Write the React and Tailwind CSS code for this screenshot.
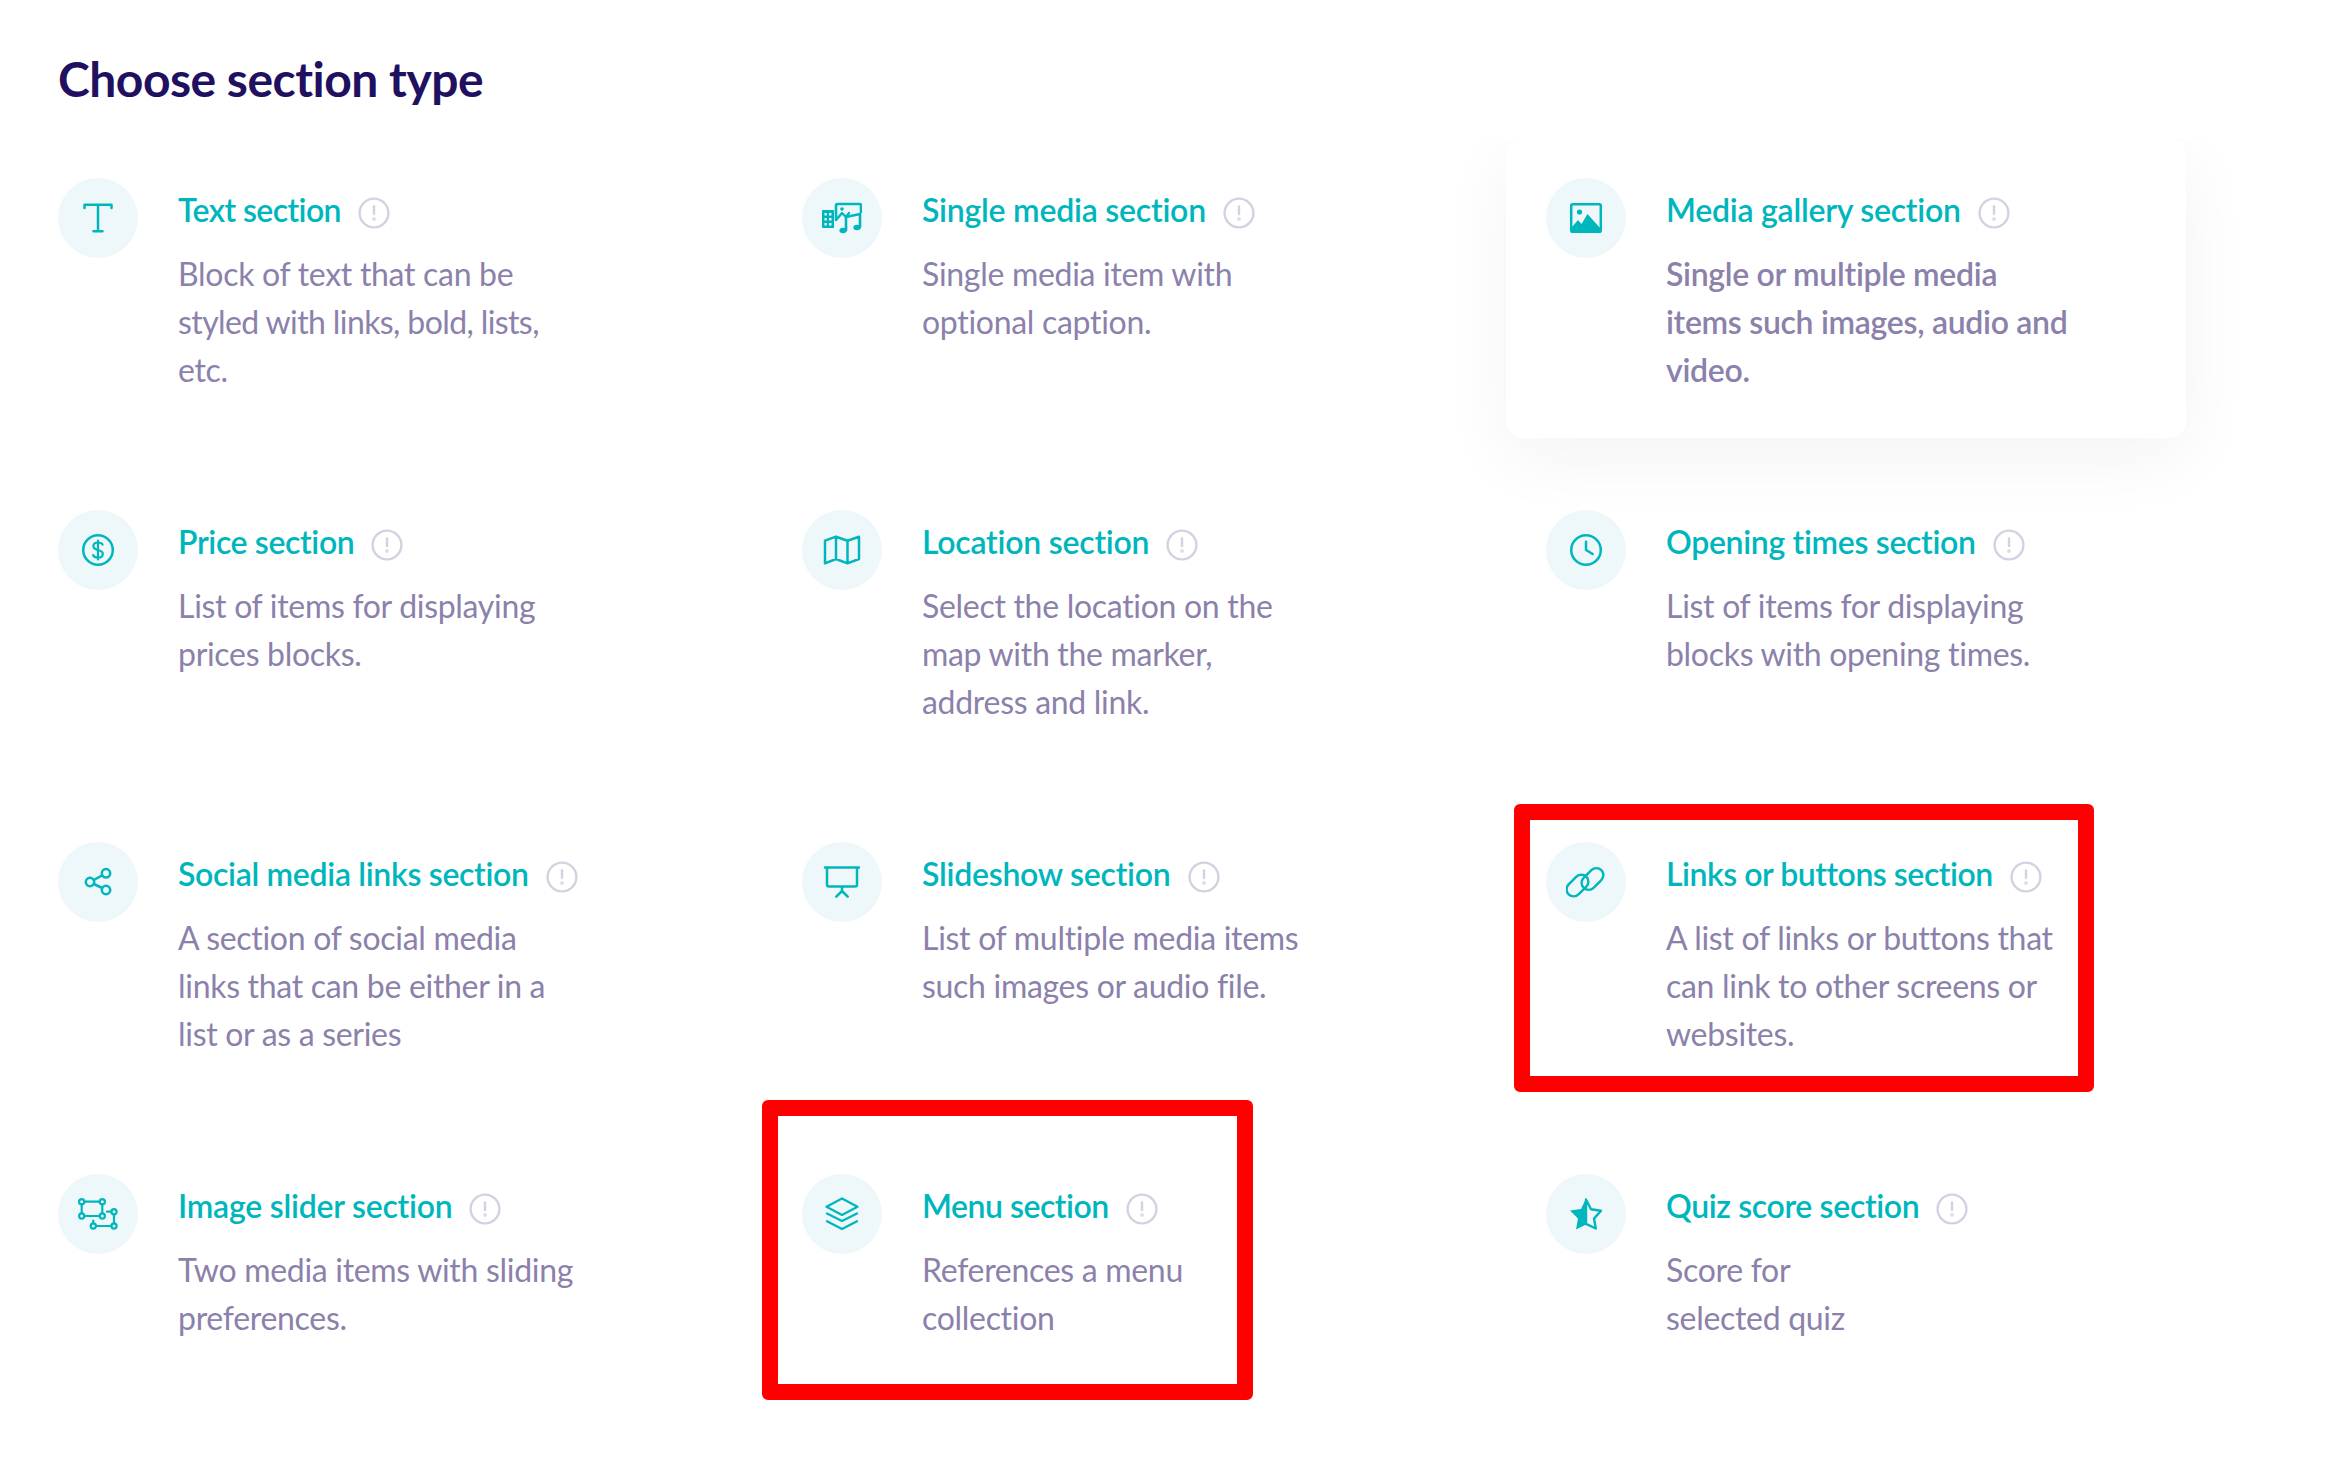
const TEAL = "#00b6bd";

const Svg = ({ children }) => (
  <svg width="40" height="40" viewBox="0 0 40 40" fill="none" stroke={TEAL} strokeWidth="2.5" strokeLinecap="round" strokeLinejoin="round">
    {children}
  </svg>
);

const icons = {
  text: (
    <Svg>
      <path d="M6.5 10V6.8H33.5V10M20 6.8V33M15.5 33.2H24.5" />
    </Svg>
  ),
  single: (
    <Svg>
      <path fill={TEAL} stroke="none" fillRule="evenodd" d="M1 12h11v18H1a1 1 0 0 1-1-1V13a1 1 0 0 1 1-1zM2.5 15v2.5h2.2V15zM7 15v2.5h2.5V15zM2.5 20v2.5h2.2V20zM7 20v2.5h2.5V20zM2.5 25v2.5h2.2V25zM7 25v2.5h2.5V25z" />
      <path strokeWidth="2.6" d="M14 22V7.5a1.5 1.5 0 0 1 1.5-1.5h22a1.5 1.5 0 0 1 1.5 1.5V14" />
      <path strokeWidth="2.4" d="M15 21l5-6 4 4 3-4" />
      <circle cx="20" cy="11" r="1.8" fill={TEAL} stroke="none" />
      <path strokeWidth="2.6" d="M24 32V19l14-3v13" />
      <ellipse cx="21" cy="32.5" rx="3.6" ry="2.8" fill={TEAL} stroke="none" />
      <ellipse cx="35" cy="29.5" rx="3.6" ry="2.8" fill={TEAL} stroke="none" />
    </Svg>
  ),
  image: (
    <Svg>
      <rect x="5.2" y="6.2" width="29.6" height="27.6" rx="1.6" />
      <circle cx="13.5" cy="14" r="2.6" fill={TEAL} stroke="none" />
      <path fill={TEAL} stroke="none" d="M6 34v-5l6-7 3.5 4L21.5 16 34 30v4z" />
    </Svg>
  ),
  price: (
    <Svg>
      <circle cx="20" cy="20" r="14.8" />
      <path d="M24.6 14.6c-.6-1.3-2-2.1-4.6-2.1-2.8 0-4.6 1.5-4.6 3.7 0 5 9.4 2.7 9.4 7.7 0 2.2-1.9 3.7-4.8 3.7-2.7 0-4.3-1-4.9-2.5M20 10.5v19" strokeWidth="2.2" />
    </Svg>
  ),
  map: (
    <Svg>
      <path d="M3 10.7L14 6.7 25.5 10.7 37 6.7V29L25.5 33.3 14 29 3 33.3zM14 6.7V29M25.5 10.7V33.3" />
    </Svg>
  ),
  clock: (
    <Svg>
      <circle cx="20" cy="20" r="14.8" />
      <path d="M20 11.7V20L26.7 24" />
    </Svg>
  ),
  social: (
    <Svg>
      <circle cx="12" cy="20" r="4.2" />
      <circle cx="28" cy="11.3" r="4.2" />
      <circle cx="28" cy="28" r="4.2" />
      <path d="M15.8 18L24.2 13.3M15.8 22L24.2 26" />
    </Svg>
  ),
  slideshow: (
    <Svg>
      <path d="M3 5.5H37M5 5.5V22.5A2 2 0 0 0 7 24.5H33A2 2 0 0 0 35 22.5V5.5M20 24.5V29M20 29L14.3 34.7M20 29L25.7 34.7" />
    </Svg>
  ),
  links: (
    <Svg>
      <g strokeWidth="2.4">
        <rect x="-1" y="16.5" width="25" height="14" rx="7" transform="rotate(-45 11.5 23.5)" />
        <rect x="14" y="10" width="25" height="14" rx="7" transform="rotate(-45 26.5 17)" />
      </g>
    </Svg>
  ),
  slider: (
    <Svg>
      <g strokeWidth="2.2">
        <circle cx="3.7" cy="7.7" r="2.6" />
        <circle cx="24.3" cy="7.7" r="2.6" />
        <circle cx="3.7" cy="22" r="2.6" />
        <circle cx="24.3" cy="22" r="2.6" />
        <path d="M6.3 7.7H21.7M6.3 22H21.7M3.7 10.3V19.4M24.3 10.3V19.4" />
        <circle cx="36" cy="17.7" r="2.6" />
        <circle cx="36" cy="32" r="2.6" />
        <circle cx="15.3" cy="32" r="2.6" />
        <path d="M33.4 17.7H29M36 20.3V29.4M33.4 32H17.9M15.3 29.4V26.7" />
      </g>
    </Svg>
  ),
  menu: (
    <Svg>
      <path d="M20 4.5L35.5 12.7 20 21 4.5 12.7zM5 19.5L20 27 35 19.5M5 27.2L20 35 35 27.2" strokeWidth="2.3" />
    </Svg>
  ),
  quiz: (
    <Svg>
      <path fill={TEAL} stroke="none" d="M20 4.5L15 15 4 16.5 12 24.5 10 35.5 20 30.5z" />
      <path d="M20 5.5L25 15.3 35 16.8 28 24.6 29.8 34.5 20 29.8z" strokeWidth="2.4" />
    </Svg>
  ),
};

const sections = [
  { icon: "text", title: "Text section", tt: "tracking-[-0.6px]", lines: ["Block of text that can be", "styled with links, bold, lists,", "etc."], tight: 1 },
  { icon: "single", title: "Single media section", tt: "tracking-[-0.23px]", lines: ["Single media item with", "optional caption."] },
  { icon: "image", title: "Media gallery section", tt: "tracking-[-0.24px]", lines: ["Single or multiple media", "items such images, audio and", "video."], active: true },
  { icon: "price", title: "Price section", tt: "tracking-[-0.37px]", lines: ["List of items for displaying", "prices blocks."] },
  { icon: "map", title: "Location section", tt: "tracking-[-0.23px]", lines: ["Select the location on the", "map with the marker,", "address and link."] },
  { icon: "clock", title: "Opening times section", tt: "tracking-[-0.32px]", lines: ["List of items for displaying", "blocks with opening times."] },
  { icon: "social", title: "Social media links section", tt: "tracking-[-0.31px]", lines: ["A section of social media", "links that can be either in a", "list or as a series"] },
  { icon: "slideshow", title: "Slideshow section", tt: "tracking-[-0.25px]", lines: ["List of multiple media items", "such images or audio file."] },
  { icon: "links", title: "Links or buttons section", tt: "tracking-[-0.47px]", lines: ["A list of links or buttons that", "can link to other screens or", "websites."] },
  { icon: "slider", title: "Image slider section", tt: "tracking-[-0.23px]", lines: ["Two media items with sliding", "preferences."] },
  { icon: "menu", title: "Menu section", tt: "tracking-[-0.48px]", lines: ["References a menu", "collection"] },
  { icon: "quiz", title: "Quiz score section", tt: "tracking-[-0.35px]", lines: ["Score for", "selected quiz"] },
];

const Info = () => (
  <svg width="32" height="32" viewBox="0 0 32 32" fill="none" stroke="#d3d2e2" strokeWidth="2.4" strokeLinecap="round" className="relative top-[3px] shrink-0">
    <circle cx="16" cy="16" r="14.4" />
    <path d="M16 9.5V17" />
    <circle cx="16" cy="22" r="0.6" />
  </svg>
);

const Card = ({ s }) => (
  <div className={`flex h-[300px] w-[680px] gap-10 rounded-2xl p-10 ${s.active ? "bg-white shadow-[0_20px_70px_rgba(40,40,100,0.05)]" : ""}`}>
    <div className="flex h-20 w-20 shrink-0 items-center justify-center rounded-full bg-[#eef8fa]">
      {icons[s.icon]}
    </div>
    <div className="min-w-0 flex-1 pt-[8px]">
      <div className={`flex h-[48px] items-center gap-[17px] text-[32px] font-semibold leading-[48px] text-[#00b6bd] ${s.tt}`}>
        <span>{s.title}</span>
        <Info />
      </div>
      <p className={`mt-[16px] text-[32px] leading-[48px] tracking-[-0.3px] text-[#8b81ab] ${s.active ? "font-semibold" : "font-normal"}`}>
        {s.lines.map((l, i) => (
          <span key={i} className={`block whitespace-nowrap ${s.tight === i ? "tracking-[-0.6px]" : ""}`}>{l}</span>
        ))}
      </p>
    </div>
  </div>
);

export default function App() {
  return (
    <div className="relative h-[1471px] w-[2340px] overflow-hidden bg-white font-['Lato',sans-serif]">
      <h1 className="pl-[58px] pt-[46px] text-[48px] font-bold leading-[66px] tracking-[-0.5px] text-[#1f1160]">
        Choose section type
      </h1>
      <div className="mt-[26px] overflow-hidden pb-[60px] pl-[18px] pr-[60px]">
        <div className="grid grid-cols-[680px_680px_680px] gap-x-[64px] gap-y-[32px]">
          {sections.map((s) => (
            <Card key={s.icon} s={s} />
          ))}
        </div>
      </div>
      <div className="absolute left-[1514px] top-[804px] h-[288px] w-[580px] rounded-md border-[16px] border-[#ff0000]" />
      <div className="absolute left-[762px] top-[1100px] h-[300px] w-[491px] rounded-md border-[16px] border-[#ff0000]" />
    </div>
  );
}
